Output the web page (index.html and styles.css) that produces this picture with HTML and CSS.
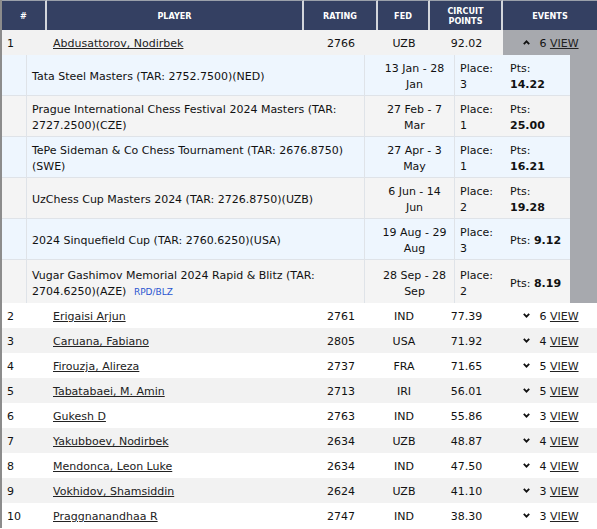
FILE: index.html
```html
<!DOCTYPE html>
<html>
<head>
<meta charset="utf-8">
<link rel="stylesheet" href="styles.css">
</head>
<body>
<table class="rank">
  <colgroup>
    <col class="c-num"><col class="c-player"><col class="c-rating"><col class="c-fed"><col class="c-pts"><col class="c-events">
  </colgroup>
  <thead>
    <tr>
      <th>#</th><th>PLAYER</th><th>RATING</th><th>FED</th><th>CIRCUIT<br>POINTS</th><th>EVENTS</th>
    </tr>
  </thead>
  <tbody>
    <tr class="odd open">
      <td class="num">1</td><td class="player"><a href="#">Abdusattorov, Nodirbek</a></td><td class="ctr">2766</td><td class="ctr">UZB</td><td class="ctr">92.02</td>
      <td class="events"><span class="chev"><svg width="7" height="5" viewBox="0 0 7 5"><polyline points="0.8,4.2 3.5,1.4 6.2,4.2" fill="none" stroke="#111" stroke-width="1.8"/></svg></span>6 <a href="#">VIEW</a></td>
    </tr>
    <tr class="details">
      <td colspan="6">
        <div class="ev">
          <div class="ev-row blue"><div class="sp"></div><div class="name"><p>Tata Steel Masters (TAR: 2752.7500)(NED)</p></div><div class="gap"></div><div class="date"><p>13 Jan - 28<br>Jan</p></div><div class="place"><p>Place:<br>3</p></div><div class="pts"><p>Pts:<br><b>14.22</b></p></div></div>
          <div class="ev-row grey"><div class="sp"></div><div class="name"><p>Prague International Chess Festival 2024 Masters (TAR:<br>2727.2500)(CZE)</p></div><div class="gap"></div><div class="date"><p>27 Feb - 7<br>Mar</p></div><div class="place"><p>Place:<br>1</p></div><div class="pts"><p>Pts:<br><b>25.00</b></p></div></div>
          <div class="ev-row blue"><div class="sp"></div><div class="name"><p>TePe Sideman &amp; Co Chess Tournament (TAR: 2676.8750)<br>(SWE)</p></div><div class="gap"></div><div class="date"><p>27 Apr - 3<br>May</p></div><div class="place"><p>Place:<br>1</p></div><div class="pts"><p>Pts:<br><b>16.21</b></p></div></div>
          <div class="ev-row grey"><div class="sp"></div><div class="name"><p>UzChess Cup Masters 2024 (TAR: 2726.8750)(UZB)</p></div><div class="gap"></div><div class="date"><p>6 Jun - 14<br>Jun</p></div><div class="place"><p>Place:<br>2</p></div><div class="pts"><p>Pts:<br><b>19.28</b></p></div></div>
          <div class="ev-row blue"><div class="sp"></div><div class="name"><p>2024 Sinquefield Cup (TAR: 2760.6250)(USA)</p></div><div class="gap"></div><div class="date"><p>19 Aug - 29<br>Aug</p></div><div class="place"><p>Place:<br>3</p></div><div class="pts"><p>Pts: <b>9.12</b></p></div></div>
          <div class="ev-row grey last"><div class="sp"></div><div class="name"><p>Vugar Gashimov Memorial 2024 Rapid &amp; Blitz (TAR:<br>2704.6250)(AZE) <span class="tag">RPD/BLZ</span></p></div><div class="gap"></div><div class="date"><p>28 Sep - 28<br>Sep</p></div><div class="place"><p>Place:<br>2</p></div><div class="pts"><p>Pts: <b>8.19</b></p></div></div>
        </div>
      </td>
    </tr>
    <tr><td class="num">2</td><td class="player"><a href="#">Erigaisi Arjun</a></td><td class="ctr">2761</td><td class="ctr">IND</td><td class="ctr">77.39</td><td class="events"><span class="chev"><svg width="7" height="5" viewBox="0 0 7 5"><polyline points="0.8,0.8 3.5,3.6 6.2,0.8" fill="none" stroke="#111" stroke-width="1.8"/></svg></span>6 <a href="#">VIEW</a></td></tr>
    <tr class="odd"><td class="num">3</td><td class="player"><a href="#">Caruana, Fabiano</a></td><td class="ctr">2805</td><td class="ctr">USA</td><td class="ctr">71.92</td><td class="events"><span class="chev"><svg width="7" height="5" viewBox="0 0 7 5"><polyline points="0.8,0.8 3.5,3.6 6.2,0.8" fill="none" stroke="#111" stroke-width="1.8"/></svg></span>4 <a href="#">VIEW</a></td></tr>
    <tr><td class="num">4</td><td class="player"><a href="#">Firouzja, Alireza</a></td><td class="ctr">2737</td><td class="ctr">FRA</td><td class="ctr">71.65</td><td class="events"><span class="chev"><svg width="7" height="5" viewBox="0 0 7 5"><polyline points="0.8,0.8 3.5,3.6 6.2,0.8" fill="none" stroke="#111" stroke-width="1.8"/></svg></span>5 <a href="#">VIEW</a></td></tr>
    <tr class="odd"><td class="num">5</td><td class="player"><a href="#">Tabatabaei, M. Amin</a></td><td class="ctr">2713</td><td class="ctr">IRI</td><td class="ctr">56.01</td><td class="events"><span class="chev"><svg width="7" height="5" viewBox="0 0 7 5"><polyline points="0.8,0.8 3.5,3.6 6.2,0.8" fill="none" stroke="#111" stroke-width="1.8"/></svg></span>5 <a href="#">VIEW</a></td></tr>
    <tr><td class="num">6</td><td class="player"><a href="#">Gukesh D</a></td><td class="ctr">2763</td><td class="ctr">IND</td><td class="ctr">55.86</td><td class="events"><span class="chev"><svg width="7" height="5" viewBox="0 0 7 5"><polyline points="0.8,0.8 3.5,3.6 6.2,0.8" fill="none" stroke="#111" stroke-width="1.8"/></svg></span>3 <a href="#">VIEW</a></td></tr>
    <tr class="odd"><td class="num">7</td><td class="player"><a href="#">Yakubboev, Nodirbek</a></td><td class="ctr">2634</td><td class="ctr">UZB</td><td class="ctr">48.87</td><td class="events"><span class="chev"><svg width="7" height="5" viewBox="0 0 7 5"><polyline points="0.8,0.8 3.5,3.6 6.2,0.8" fill="none" stroke="#111" stroke-width="1.8"/></svg></span>4 <a href="#">VIEW</a></td></tr>
    <tr><td class="num">8</td><td class="player"><a href="#">Mendonca, Leon Luke</a></td><td class="ctr">2634</td><td class="ctr">IND</td><td class="ctr">47.50</td><td class="events"><span class="chev"><svg width="7" height="5" viewBox="0 0 7 5"><polyline points="0.8,0.8 3.5,3.6 6.2,0.8" fill="none" stroke="#111" stroke-width="1.8"/></svg></span>4 <a href="#">VIEW</a></td></tr>
    <tr class="odd"><td class="num">9</td><td class="player"><a href="#">Vokhidov, Shamsiddin</a></td><td class="ctr">2624</td><td class="ctr">UZB</td><td class="ctr">41.10</td><td class="events"><span class="chev"><svg width="7" height="5" viewBox="0 0 7 5"><polyline points="0.8,0.8 3.5,3.6 6.2,0.8" fill="none" stroke="#111" stroke-width="1.8"/></svg></span>3 <a href="#">VIEW</a></td></tr>
    <tr><td class="num">10</td><td class="player"><a href="#">Praggnanandhaa R</a></td><td class="ctr">2747</td><td class="ctr">IND</td><td class="ctr">38.30</td><td class="events"><span class="chev"><svg width="7" height="5" viewBox="0 0 7 5"><polyline points="0.8,0.8 3.5,3.6 6.2,0.8" fill="none" stroke="#111" stroke-width="1.8"/></svg></span>3 <a href="#">VIEW</a></td></tr>
  </tbody>
</table>
</body>
</html>
```
FILE: styles.css
```css
html, body {
  margin: 0;
  padding: 0;
  background: #ffffff;
}
body {
  font-family: "DejaVu Sans", Verdana, sans-serif;
  font-size: 11px;
  color: #111;
}
.rank {
  width: 597px;
  table-layout: fixed;
  border-collapse: separate;
  border-spacing: 0;
  border-left: 2px solid #8c8c8c;
}
.c-num { width: 45px; }
.c-player { width: 257px; }
.c-rating { width: 74px; }
.c-fed { width: 52px; }
.c-pts { width: 73px; }
.c-events { width: 94px; }

.rank th {
  background: #344062;
  color: #ffffff;
  font-family: "DejaVu Sans Condensed", "DejaVu Sans", sans-serif;
  font-weight: bold;
  font-size: 9px;
  line-height: 10px;
  height: 30px;
  box-sizing: border-box;
  padding: 0;
  border-top: 1px solid #9aa0aa;
  border-right: 2px solid #d3d6dc;
  text-align: center;
  vertical-align: middle;
}
.rank th:last-child { border-right: 0; }

.rank tbody > tr > td {
  padding: 6px 0 3px;
  line-height: 16px;
  vertical-align: middle;
}
.rank tbody > tr.odd > td { background: #f2f2f2; }
.rank td.num { padding-left: 5px; }
.rank td.player { padding-left: 6px; }
.rank td.ctr { text-align: center; }
.rank a {
  color: #222;
  text-decoration: underline;
}
.rank td.events {
  text-align: center;
  white-space: nowrap;
  padding-left: 2px;
}
.rank tr.open td.events { background: #a7a9ae; }
.chev {
  display: inline-block;
  width: 7px;
  height: 5px;
  margin-right: 9px;
  vertical-align: 2px;
}
.chev svg { display: block; }

.rank tbody > tr.details > td {
  padding: 0 27px 0 0;
  background: #a7a9ae;
}
.ev {
  display: grid;
  grid-template-columns: 25px 338px 10px 80px 50px 65px;
  width: 568px;
}
.ev-row { display: contents; }
.ev-row > div {
  box-sizing: border-box;
  display: flex;
  flex-direction: column;
  justify-content: center;
  min-height: 41px;
  padding: 6px 5px 2px;
  line-height: 16px;
  white-space: nowrap;
  border-bottom: 1px solid #dfe3e8;
}
.ev-row > div > p { margin: 0; }
.ev-row.last > div { border-bottom: 0; min-height: 43px; }
.ev-row > .sp,
.ev-row > .name,
.ev-row > .gap,
.ev-row > .date { border-right: 1px solid #dfe3e8; }
.ev-row > .date { text-align: center; padding-left: 2px; padding-right: 2px; }
.ev-row.blue > div { background: #eef6fe; }
.ev-row.grey > div { background: #f4f4f4; }
.tag {
  color: #2a55d0;
  font-size: 9px;
  margin-left: 4px;
}
```
